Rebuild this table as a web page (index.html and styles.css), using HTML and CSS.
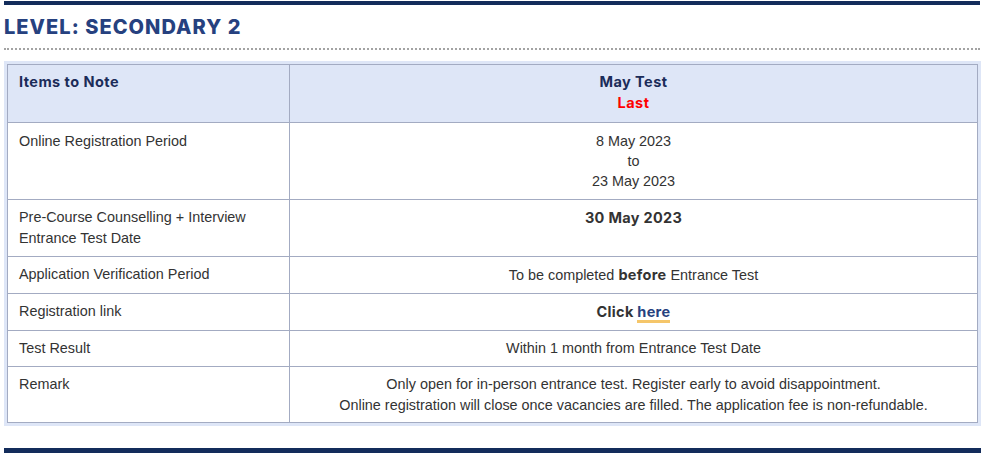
FILE: index.html
```html
<!DOCTYPE html>
<html>
<head>
<meta charset="utf-8">
<link rel="stylesheet" href="styles.css">
</head>
<body>
<div class="page">
  <div class="topbar"></div>
  <h2 class="level">LEVEL: SECONDARY 2</h2>
  <div class="dots"></div>
  <div class="frame">
    <table class="info">
      <colgroup><col class="c1"><col></colgroup>
      <thead>
        <tr>
          <th class="left">Items to Note</th>
          <th class="center">May Test<br><span class="last">Last</span></th>
        </tr>
      </thead>
      <tbody>
        <tr class="r1">
          <td>Online Registration Period</td>
          <td class="center">8 May 2023<br>to<br>23 May 2023</td>
        </tr>
        <tr>
          <td>Pre-Course Counselling + Interview<br>Entrance Test Date</td>
          <td class="center"><b class="strong">30 May 2023</b></td>
        </tr>
        <tr>
          <td>Application Verification Period</td>
          <td class="center">To be completed <b class="strong">before</b> Entrance Test</td>
        </tr>
        <tr>
          <td>Registration link</td>
          <td class="center"><b class="strong">Click <a class="here" href="#">here</a></b></td>
        </tr>
        <tr>
          <td>Test Result</td>
          <td class="center">Within 1 month from Entrance Test Date</td>
        </tr>
        <tr class="r6">
          <td>Remark</td>
          <td class="center">Only open for in-person entrance test. Register early to avoid disappointment.<br>Online registration will close once vacancies are filled. The application fee is non-refundable.</td>
        </tr>
      </tbody>
    </table>
  </div>
  <div class="bottombar"></div>
</div>
</body>
</html>
```
FILE: styles.css
```css
html, body {
  margin: 0;
  padding: 0;
  background: #ffffff;
}
body {
  font-family: "Liberation Sans", Arial, sans-serif;
  font-size: 14.4px;
  color: #333333;
}
.page {
  width: 977px;
  margin-left: 4px;
  padding-top: 1px;
}
.topbar {
  height: 4px;
  background: #132c5b;
  margin-right: 1px;
}
.level {
  margin: 10px 0 0 0;
  font-family: Inter, "DejaVu Sans", sans-serif;
  font-weight: 800;
  font-size: 20px;
  line-height: 24px;
  letter-spacing: 1.05px;
  color: #26417f;
}
.dots {
  margin-top: 9px;
  height: 0;
  border-bottom: 2px dotted #a3a3a3;
  margin-right: 1px;
}
.frame {
  margin-top: 11px;
  background: #dee6f7;
  padding: 3px;
}
.info {
  width: 100%;
  border-collapse: collapse;
  background: #ffffff;
}
.c1 {
  width: 282px;
}
.info th, .info td {
  border: 1px solid #a3abc2;
  vertical-align: top;
  text-align: left;
  padding: 7px 11px 7px 11px;
  line-height: 21px;
}
.info th {
  background: #dee6f7;
  font-family: Inter, "DejaVu Sans", sans-serif;
  font-weight: 700;
  font-size: 14.5px;
  letter-spacing: 0.45px;
  color: #1b2c59;
  padding-top: 6px;
  padding-bottom: 9px;
}
.info .center {
  text-align: center;
}
.info .r1 td {
  padding-top: 8px;
}
.info .r1 td.center {
  line-height: 20px;
  padding-bottom: 8px;
}
.info .r6 td {
  padding-bottom: 6px;
}
.last {
  color: #ff0000;
}
.strong {
  font-family: Inter, "DejaVu Sans", sans-serif;
  font-weight: 700;
  font-size: 14.5px;
  letter-spacing: 0.3px;
  color: #333333;
}
.here {
  color: #26417f;
  text-decoration: none;
  border-bottom: 3px solid #f5c66a;
}
.bottombar {
  margin-top: 22px;
  height: 6px;
  background: #132c5b;
}
```
